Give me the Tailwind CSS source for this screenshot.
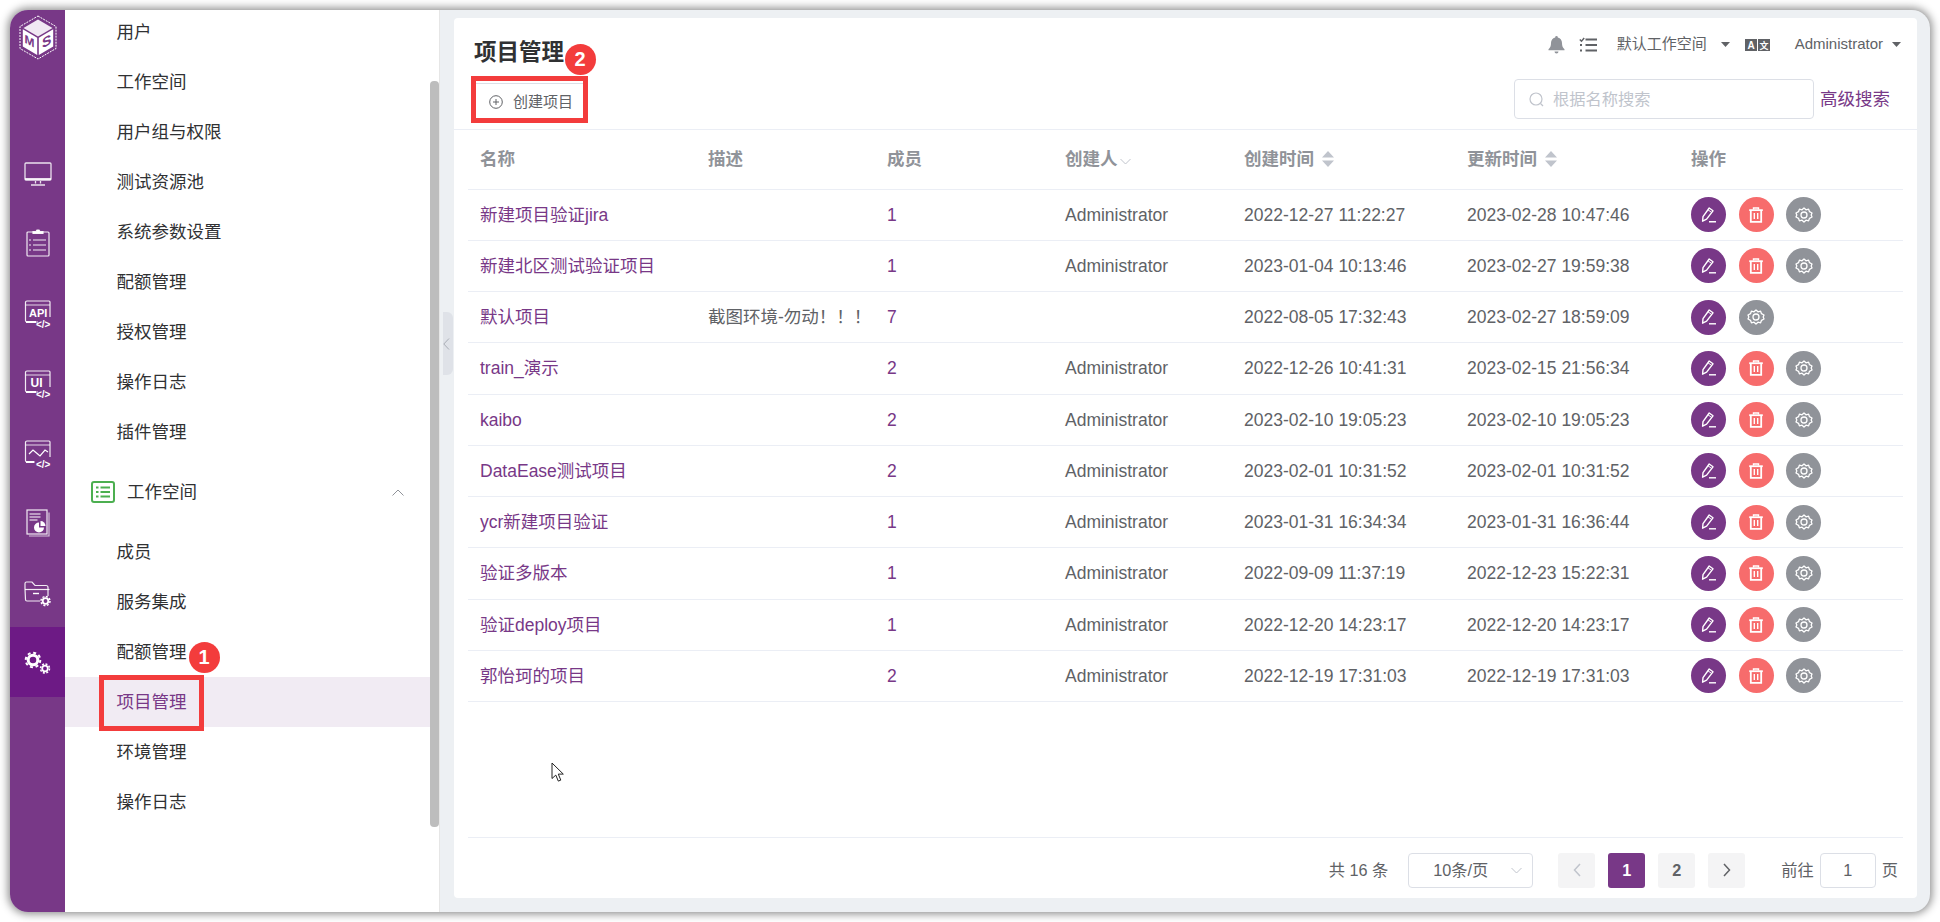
<!DOCTYPE html>
<html lang="zh-CN">
<head>
<meta charset="utf-8">
<title>项目管理</title>
<script src="https://cdn.jsdelivr.net/npm/@tailwindcss/browser@4"></script>
</head>
<body class="m-0 bg-white [font-family:'Liberation_Sans','Noto_Sans_CJK_SC',sans-serif]">
<svg width="0" height="0" class="absolute">
  <defs>
    <symbol id="edit" viewBox="0 0 20 20">
      <path d="M3.600 16.200l.4-4.600L10.200 3l3.800 2.800-6.400 8.400z" fill="none" stroke="#fff" stroke-width="1.400" stroke-linejoin="round"/>
      <path d="M9 4.800l3.800 2.800" stroke="#fff" stroke-width="1"/>
      <path d="M10 16.800h7" stroke="#fff" stroke-width="1.400"/>
    </symbol>
    <symbol id="trash" viewBox="0 0 20 20">
      <path d="M3.200 5.200h13.600" stroke="#fff" stroke-width="1.800"/>
      <path d="M7.500 4.500V3h5v1.500" fill="none" stroke="#fff" stroke-width="1.400"/>
      <path d="M4.800 5.600v11.200h10.400V5.600" fill="none" stroke="#fff" stroke-width="1.800"/>
      <path d="M8.300 8v6M11.700 8v6" stroke="#fff" stroke-width="1.400"/>
    </symbol>
    <symbol id="gear" viewBox="0 0 20 20">
      <path d="M10 3l2 1.800 2.600-.6.9 2.500 2.500 1.300-.8 2 .8 2-2.500 1.300-.9 2.500-2.600-.6L10 17l-2-1.800-2.600.6-.9-2.500L2 12l.8-2-.8-2 2.500-1.300.9-2.500 2.600.6z" fill="none" stroke="#fff" stroke-width="1.300" stroke-linejoin="round"/>
      <circle cx="10" cy="10" r="3" fill="none" stroke="#fff" stroke-width="1.300"/>
    </symbol>
    <symbol id="sort" viewBox="0 0 14 18">
      <path d="M7 1l6 6.500H1zM7 17l-6-6.500h12z" fill="#c0c4cc"/>
    </symbol>
  </defs>
</svg>

<div class="w-[1940px] h-[922px] p-[10px] overflow-hidden">
  <div class="relative flex h-[902px] rounded-[18px] overflow-hidden bg-[#edf0f3] shadow-[0_0_9px_2px_rgba(0,0,0,0.45)]">

    <!-- icon rail -->
    <nav class="w-[55px] shrink-0 flex flex-col bg-[#783887]">
      <div class="h-[127px] flex justify-center pt-[5px]">
        <svg width="38" height="45" viewBox="0 0 38 45">
          <path d="M19 1L37 11.500V33.500L19 44 1 33.500V11.500z" fill="none" stroke="#fff" stroke-width="1" stroke-dasharray="2 1"/>
          <path d="M19 4.500L33.500 13 19 21.500 4.500 13z" fill="#f1e9f3"/>
          <path d="M3.800 14.300L18.200 22.700V40L3.800 31.600z" fill="#fff"/>
          <path d="M34.200 14.300L19.800 22.700V40L34.200 31.600z" fill="#fff"/>
          <text x="0" y="0" transform="translate(5.500 27.500) skewY(28)" font-size="12" font-weight="700" fill="#783887" font-family="Liberation Sans">M</text>
          <text x="0" y="0" transform="translate(23 33.500) skewY(-28)" font-size="14" font-weight="700" fill="#783887" font-family="Liberation Sans">S</text>
        </svg>
      </div>
      <div class="h-[70px] pt-[3px] flex items-center justify-center">
        <svg width="28" height="24" viewBox="0 0 28 24" fill="none" stroke="#fff" stroke-opacity=".85"><rect x="1" y="1" width="26" height="17" rx="1" stroke-width="1.300"/><path d="M1 17h26" stroke-width="2"/><path d="M11.500 19v2.500M16.500 19v2.500" stroke-width="1.300"/><path d="M7 23h14" stroke-width="1.300"/></svg>
      </div>
      <div class="h-[70px] pt-[2px] flex items-center justify-center">
        <svg width="24" height="28" viewBox="0 0 24 28" fill="none" stroke="#fff" stroke-opacity=".9" stroke-width="1.200"><path d="M7 3H2a1 1 0 0 0-1 1v22a1 1 0 0 0 1 1h20a1 1 0 0 0 1-1V4a1 1 0 0 0-1-1h-5"/><path d="M7 4.500V2.500h3l1-1.500h2l1 1.500h3v2z" fill="#fff"/><path d="M3 11h2M7 11h13M3 16h2M7 16h13M3 21h2M7 21h13"/></svg>
      </div>
      <div class="h-[70px] pt-[3px] flex items-center justify-center">
        <svg width="28" height="28" viewBox="0 0 28 28" fill="none"><path d="M14 22H3a1.500 1.500 0 0 1-1.500-1.500V2.500A1.500 1.500 0 0 1 3 1h22a1 1 0 0 1 1 1v15" stroke="#fff" stroke-opacity=".9" stroke-width="1.200"/><path d="M1.500 5h24.500" stroke="#fff" stroke-opacity=".8"/><path d="M2 22h10" stroke="#fff" stroke-width="2"/><text x="5" y="17" font-size="11" font-weight="700" fill="#fff" font-family="Liberation Sans">API</text><text x="12" y="27.500" font-size="10" font-weight="700" fill="#fff" font-family="Liberation Sans">&lt;/&gt;</text></svg>
      </div>
      <div class="h-[70px] pt-[3px] flex items-center justify-center">
        <svg width="28" height="28" viewBox="0 0 28 28" fill="none"><path d="M14 22H3a1.500 1.500 0 0 1-1.500-1.500V2.500A1.500 1.500 0 0 1 3 1h22a1 1 0 0 1 1 1v15" stroke="#fff" stroke-opacity=".9" stroke-width="1.200"/><path d="M1.500 5h24.500" stroke="#fff" stroke-opacity=".8"/><path d="M2 22h10" stroke="#fff" stroke-width="2"/><text x="6.500" y="17" font-size="12" font-weight="700" fill="#fff" font-family="Liberation Sans">UI</text><text x="12" y="27.500" font-size="10" font-weight="700" fill="#fff" font-family="Liberation Sans">&lt;/&gt;</text></svg>
      </div>
      <div class="h-[70px] pt-[3px] flex items-center justify-center">
        <svg width="28" height="28" viewBox="0 0 28 28" fill="none"><path d="M11 22H3a1.500 1.500 0 0 1-1.500-1.500V2.500A1.500 1.500 0 0 1 3 1h22a1 1 0 0 1 1 1v15" stroke="#fff" stroke-opacity=".9" stroke-width="1.200"/><path d="M1.500 5h24.500" stroke="#fff" stroke-opacity=".8"/><path d="M2 22h8" stroke="#fff" stroke-width="2"/><path d="M5 14l4-4 3.500 3 3.500 3 5-6 3 2" stroke="#fff" stroke-width="1.200"/><text x="12" y="27.500" font-size="10" font-weight="700" fill="#fff" font-family="Liberation Sans">&lt;/&gt;</text></svg>
      </div>
      <div class="h-[70px] pt-[2px] flex items-center justify-center">
        <svg width="24" height="28" viewBox="0 0 24 28" fill="none"><rect x="1" y="1" width="20" height="24" stroke="#fff" stroke-opacity=".9" stroke-width="1.200"/><path d="M23 3.500V27H3" stroke="#fff" stroke-opacity=".7" stroke-width="1.200"/><path d="M3.500 5h11M3.500 8h11M3.500 11h8" stroke="#fff" stroke-width="1.100"/><path d="M13 13.500a5 5 0 1 0 5 5h-5z" fill="#fff"/><path d="M14.500 12a5 5 0 0 1 5 5h-5z" fill="#fff"/></svg>
      </div>
      <div class="h-[70px] pt-[3px] flex items-center justify-center">
        <svg width="27" height="26" viewBox="0 0 27 26" fill="none"><path d="M16 20H3a1.500 1.500 0 0 1-1.500-1.500L1 8" stroke="#fff" stroke-opacity=".9" stroke-width="1.200"/><path d="M1 8V2.500A1.500 1.500 0 0 1 2.500 1H8l3 3.500h11a2 2 0 0 1 2 2V15" stroke="#fff" stroke-opacity=".9" stroke-width="1.200"/><path d="M1 8.500h24.500" stroke="#fff" stroke-opacity=".9" stroke-width="1.200"/><path d="M9 12.500h6" stroke="#fff" stroke-width="1.400"/><circle cx="21.500" cy="20" r="2.800" stroke="#fff" stroke-width="1.800"/><circle cx="21.500" cy="20" r="4.500" stroke="#fff" stroke-width="1.500" stroke-dasharray="2 1.500"/></svg>
      </div>
      <div class="h-[70px] pt-[1px] flex items-center justify-center bg-[#6d1a85]">
        <svg width="27" height="24" viewBox="0 0 27 24" fill="none"><circle cx="9" cy="9" r="4.800" stroke="#fff" stroke-width="3"/><circle cx="9" cy="9" r="7.300" stroke="#fff" stroke-width="2" stroke-dasharray="3 2.730"/><circle cx="21" cy="17.500" r="2.800" stroke="#fff" stroke-width="1.800"/><circle cx="21" cy="17.500" r="4.500" stroke="#fff" stroke-width="1.500" stroke-dasharray="2 1.530"/></svg>
      </div>
    </nav>

    <!-- menu -->
    <aside class="relative w-[375px] shrink-0 bg-white border-r border-[#e6e6e6] overflow-hidden text-[17.5px] text-[#303133]">
      <ul class="-mt-[3px]">
        <li class="h-[50px] pl-[51.500px] flex items-center">用户</li>
        <li class="h-[50px] pl-[51.500px] flex items-center">工作空间</li>
        <li class="h-[50px] pl-[51.500px] flex items-center">用户组与权限</li>
        <li class="h-[50px] pl-[51.500px] flex items-center">测试资源池</li>
        <li class="h-[50px] pl-[51.500px] flex items-center">系统参数设置</li>
        <li class="h-[50px] pl-[51.500px] flex items-center">配额管理</li>
        <li class="h-[50px] pl-[51.500px] flex items-center">授权管理</li>
        <li class="h-[50px] pl-[51.500px] flex items-center">操作日志</li>
        <li class="h-[50px] pl-[51.500px] flex items-center">插件管理</li>
      </ul>
      <div class="h-[70px] pl-[26px] pr-[35px] flex items-center">
        <svg width="24" height="22" viewBox="0 0 24 22" fill="none" class="mr-[12px]"><rect x="1" y="1" width="22" height="20" rx="2" stroke="#4caf50" stroke-width="2"/><path d="M5 6.500h2.500M9.500 6.500H19M5 11h2.500M9.500 11H19M5 15.500h2.500M9.500 15.500H19" stroke="#4caf50" stroke-width="2.200"/></svg>
        <span class="flex-1 pt-[1px]">工作空间</span>
        <svg width="12" height="7" viewBox="0 0 12 7" fill="none"><path d="M.5 6.500L6 1l5.500 5.500" stroke="#909399"/></svg>
      </div>
      <ul class="w-[365px]">
        <li class="h-[50px] pl-[51.500px] flex items-center">成员</li>
        <li class="h-[50px] pl-[51.500px] flex items-center">服务集成</li>
        <li class="h-[50px] pl-[51.500px] flex items-center">配额管理</li>
        <li class="h-[50px] pl-[51.500px] flex items-center bg-[#f1ebf3] text-[#783887]">项目管理</li>
        <li class="h-[50px] pl-[51.500px] flex items-center">环境管理</li>
        <li class="h-[50px] pl-[51.500px] flex items-center">操作日志</li>
      </ul>
      <div class="absolute left-[365px] top-[71px] w-[9px] h-[746px] rounded-[4px] bg-[#bdbdbd]"></div>
    </aside>

    <!-- collapse tab -->
    <div class="absolute left-[433px] top-[302px] w-[10px] h-[63px] rounded-r-[6px] bg-[#dfe2e8] flex items-center">
      <svg width="7" height="12" viewBox="0 0 7 12" fill="none"><path d="M6 .5L.8 6 6 11.500" stroke="#a9adb5"/></svg>
    </div>

    <!-- main -->
    <main class="flex-1 min-w-0 pt-[8px] pb-[14px] pl-[14px] pr-[13px]">
      <section class="h-[880px] flex flex-col bg-white rounded-[4px]">
        <header class="h-[112px] shrink-0 flex justify-between border-b border-[#ebeef5] pl-[20px] pr-[16px]">
          <div>
            <h1 class="mt-[20px] h-[30px] leading-[30px] text-[22.5px] font-bold text-[#303133]">项目管理</h1>
            <button class="mt-[15px] w-[111px] h-[37px] border border-[#dcdfe6] flex items-center pl-[14px] pt-[1px] text-[15px] text-[#606266]">
              <svg width="14" height="14" viewBox="0 0 14 14" fill="none" class="mr-[10px]"><circle cx="7" cy="7" r="6.300" stroke="#606266"/><path d="M4 7h6M7 4v6" stroke="#606266"/></svg>
              创建项目
            </button>
          </div>
          <div class="flex flex-col items-end">
            <div class="mt-[14px] h-[25px] flex items-center text-[15px] text-[#606266]">
              <svg width="17" height="18" viewBox="0 0 17 18" class="mr-[14px]"><path d="M8.500 0a1.300 1.300 0 0 1 1.300 1.400c2.800.6 4.200 2.900 4.200 5.600 0 3 .8 4.700 2.500 6.200v1H.5v-1C2.200 11.700 3 10 3 7c0-2.700 1.400-5 4.200-5.600A1.300 1.300 0 0 1 8.500 0zM6.500 15.500h4a2 2 0 0 1-4 0z" fill="#909399"/></svg>
              <svg width="18" height="16" viewBox="0 0 18 16" fill="none" class="mr-[20px]"><path d="M.8 2.500l1.700 1.700L5.200 1" stroke="#606266" stroke-width="1.500"/><path d="M6.500 2.500H18M6.500 8H18M6.500 13.500H18" stroke="#606266" stroke-width="2"/><path d="M1 8h2.500M1 13.500h2.500" stroke="#606266" stroke-width="2.200" stroke-dasharray="2 1"/></svg>
              <span>默认工作空间</span>
              <svg width="9" height="5" viewBox="0 0 9 5" class="ml-[14px]"><path d="M0 0h9L4.500 5z" fill="#606266"/></svg>
              <svg width="25" height="12" viewBox="0 0 25 12" class="ml-[15px]"><rect width="12" height="12" fill="#606266"/><rect x="13" width="12" height="12" fill="#606266"/><text x="2.500" y="10" font-size="10" font-weight="700" fill="#fff" font-family="Liberation Sans">A</text><text x="14.500" y="10" font-size="9" font-weight="700" fill="#fff" font-family="Noto Sans CJK SC">文</text></svg>
              <span class="ml-[25px]">Administrator</span>
              <svg width="9" height="5" viewBox="0 0 9 5" class="ml-[9px]"><path d="M0 0h9L4.500 5z" fill="#606266"/></svg>
            </div>
            <div class="mt-[22px] flex items-center mr-[11px]">
              <div class="w-[300px] h-[40px] rounded-[4px] border border-[#dcdfe6] flex items-center pl-[14px] text-[16.250px] text-[#c0c4cc]">
                <svg width="15" height="15" viewBox="0 0 15 15" fill="none" class="mr-[9px]"><circle cx="7" cy="7" r="6" stroke="#c0c4cc" stroke-width="1.200"/><path d="M11.500 11.500l2.500 2.500" stroke="#c0c4cc" stroke-width="1.200"/></svg>
                根据名称搜索
              </div>
              <a class="ml-[6px] text-[17.5px] text-[#783887]">高级搜索</a>
            </div>
          </div>
        </header>

        <div class="flex-1 px-[14px] text-[17.5px] text-[#606266]">
          <div class="h-[59.500px] grid grid-cols-[228px_179px_178px_179px_223px_224px_1fr] items-center border-b border-[#ebeef5] font-bold text-[#909399]">
            <div class="pl-[12px]">名称</div><div class="pl-[12px]">描述</div><div class="pl-[12px]">成员</div>
            <div class="pl-[12px] flex items-center">创建人<svg width="11" height="7" viewBox="0 0 11 7" fill="none" class="ml-[2px] mt-[4px]"><path d="M.5 1l5 5 5-5" stroke="#c0c4cc"/></svg></div>
            <div class="pl-[12px] flex items-center">创建时间<svg width="14" height="18" class="ml-[7px]"><use href="#sort"/></svg></div>
            <div class="pl-[12px] flex items-center">更新时间<svg width="14" height="18" class="ml-[7px]"><use href="#sort"/></svg></div>
            <div class="pl-[12px]">操作</div>
          </div>

          <div class="h-[51.250px] grid grid-cols-[228px_179px_178px_179px_223px_224px_1fr] items-center border-b border-[#ebeef5]">
            <div class="pl-[12px] text-[#783887]">新建项目验证jira</div><div class="pl-[12px]"></div><div class="pl-[12px] text-[#783887]">1</div><div class="pl-[12px]">Administrator</div><div class="pl-[12px]">2022-12-27 11:22:27</div><div class="pl-[12px]">2023-02-28 10:47:46</div>
            <div class="pl-[12px] flex gap-[12.500px]">
              <span class="w-[35px] h-[35px] rounded-full bg-[#783887] flex items-center justify-center"><svg width="20" height="20"><use href="#edit"/></svg></span>
              <span class="w-[35px] h-[35px] rounded-full bg-[#f76c6c] flex items-center justify-center"><svg width="20" height="20"><use href="#trash"/></svg></span>
              <span class="w-[35px] h-[35px] rounded-full bg-[#909399] flex items-center justify-center"><svg width="20" height="20"><use href="#gear"/></svg></span>
            </div>
          </div>
          <div class="h-[51.250px] grid grid-cols-[228px_179px_178px_179px_223px_224px_1fr] items-center border-b border-[#ebeef5]">
            <div class="pl-[12px] text-[#783887]">新建北区测试验证项目</div><div class="pl-[12px]"></div><div class="pl-[12px] text-[#783887]">1</div><div class="pl-[12px]">Administrator</div><div class="pl-[12px]">2023-01-04 10:13:46</div><div class="pl-[12px]">2023-02-27 19:59:38</div>
            <div class="pl-[12px] flex gap-[12.500px]">
              <span class="w-[35px] h-[35px] rounded-full bg-[#783887] flex items-center justify-center"><svg width="20" height="20"><use href="#edit"/></svg></span>
              <span class="w-[35px] h-[35px] rounded-full bg-[#f76c6c] flex items-center justify-center"><svg width="20" height="20"><use href="#trash"/></svg></span>
              <span class="w-[35px] h-[35px] rounded-full bg-[#909399] flex items-center justify-center"><svg width="20" height="20"><use href="#gear"/></svg></span>
            </div>
          </div>
          <div class="h-[51.250px] grid grid-cols-[228px_179px_178px_179px_223px_224px_1fr] items-center border-b border-[#ebeef5]">
            <div class="pl-[12px] text-[#783887]">默认项目</div><div class="pl-[12px]">截图环境-勿动！！！</div><div class="pl-[12px] text-[#783887]">7</div><div class="pl-[12px]"></div><div class="pl-[12px]">2022-08-05 17:32:43</div><div class="pl-[12px]">2023-02-27 18:59:09</div>
            <div class="pl-[12px] flex gap-[12.500px]">
              <span class="w-[35px] h-[35px] rounded-full bg-[#783887] flex items-center justify-center"><svg width="20" height="20"><use href="#edit"/></svg></span>
              <span class="w-[35px] h-[35px] rounded-full bg-[#909399] flex items-center justify-center"><svg width="20" height="20"><use href="#gear"/></svg></span>
            </div>
          </div>
          <div class="h-[51.250px] grid grid-cols-[228px_179px_178px_179px_223px_224px_1fr] items-center border-b border-[#ebeef5]">
            <div class="pl-[12px] text-[#783887]">train_演示</div><div class="pl-[12px]"></div><div class="pl-[12px] text-[#783887]">2</div><div class="pl-[12px]">Administrator</div><div class="pl-[12px]">2022-12-26 10:41:31</div><div class="pl-[12px]">2023-02-15 21:56:34</div>
            <div class="pl-[12px] flex gap-[12.500px]">
              <span class="w-[35px] h-[35px] rounded-full bg-[#783887] flex items-center justify-center"><svg width="20" height="20"><use href="#edit"/></svg></span>
              <span class="w-[35px] h-[35px] rounded-full bg-[#f76c6c] flex items-center justify-center"><svg width="20" height="20"><use href="#trash"/></svg></span>
              <span class="w-[35px] h-[35px] rounded-full bg-[#909399] flex items-center justify-center"><svg width="20" height="20"><use href="#gear"/></svg></span>
            </div>
          </div>
          <div class="h-[51.250px] grid grid-cols-[228px_179px_178px_179px_223px_224px_1fr] items-center border-b border-[#ebeef5]">
            <div class="pl-[12px] text-[#783887]">kaibo</div><div class="pl-[12px]"></div><div class="pl-[12px] text-[#783887]">2</div><div class="pl-[12px]">Administrator</div><div class="pl-[12px]">2023-02-10 19:05:23</div><div class="pl-[12px]">2023-02-10 19:05:23</div>
            <div class="pl-[12px] flex gap-[12.500px]">
              <span class="w-[35px] h-[35px] rounded-full bg-[#783887] flex items-center justify-center"><svg width="20" height="20"><use href="#edit"/></svg></span>
              <span class="w-[35px] h-[35px] rounded-full bg-[#f76c6c] flex items-center justify-center"><svg width="20" height="20"><use href="#trash"/></svg></span>
              <span class="w-[35px] h-[35px] rounded-full bg-[#909399] flex items-center justify-center"><svg width="20" height="20"><use href="#gear"/></svg></span>
            </div>
          </div>
          <div class="h-[51.250px] grid grid-cols-[228px_179px_178px_179px_223px_224px_1fr] items-center border-b border-[#ebeef5]">
            <div class="pl-[12px] text-[#783887]">DataEase测试项目</div><div class="pl-[12px]"></div><div class="pl-[12px] text-[#783887]">2</div><div class="pl-[12px]">Administrator</div><div class="pl-[12px]">2023-02-01 10:31:52</div><div class="pl-[12px]">2023-02-01 10:31:52</div>
            <div class="pl-[12px] flex gap-[12.500px]">
              <span class="w-[35px] h-[35px] rounded-full bg-[#783887] flex items-center justify-center"><svg width="20" height="20"><use href="#edit"/></svg></span>
              <span class="w-[35px] h-[35px] rounded-full bg-[#f76c6c] flex items-center justify-center"><svg width="20" height="20"><use href="#trash"/></svg></span>
              <span class="w-[35px] h-[35px] rounded-full bg-[#909399] flex items-center justify-center"><svg width="20" height="20"><use href="#gear"/></svg></span>
            </div>
          </div>
          <div class="h-[51.250px] grid grid-cols-[228px_179px_178px_179px_223px_224px_1fr] items-center border-b border-[#ebeef5]">
            <div class="pl-[12px] text-[#783887]">ycr新建项目验证</div><div class="pl-[12px]"></div><div class="pl-[12px] text-[#783887]">1</div><div class="pl-[12px]">Administrator</div><div class="pl-[12px]">2023-01-31 16:34:34</div><div class="pl-[12px]">2023-01-31 16:36:44</div>
            <div class="pl-[12px] flex gap-[12.500px]">
              <span class="w-[35px] h-[35px] rounded-full bg-[#783887] flex items-center justify-center"><svg width="20" height="20"><use href="#edit"/></svg></span>
              <span class="w-[35px] h-[35px] rounded-full bg-[#f76c6c] flex items-center justify-center"><svg width="20" height="20"><use href="#trash"/></svg></span>
              <span class="w-[35px] h-[35px] rounded-full bg-[#909399] flex items-center justify-center"><svg width="20" height="20"><use href="#gear"/></svg></span>
            </div>
          </div>
          <div class="h-[51.250px] grid grid-cols-[228px_179px_178px_179px_223px_224px_1fr] items-center border-b border-[#ebeef5]">
            <div class="pl-[12px] text-[#783887]">验证多版本</div><div class="pl-[12px]"></div><div class="pl-[12px] text-[#783887]">1</div><div class="pl-[12px]">Administrator</div><div class="pl-[12px]">2022-09-09 11:37:19</div><div class="pl-[12px]">2022-12-23 15:22:31</div>
            <div class="pl-[12px] flex gap-[12.500px]">
              <span class="w-[35px] h-[35px] rounded-full bg-[#783887] flex items-center justify-center"><svg width="20" height="20"><use href="#edit"/></svg></span>
              <span class="w-[35px] h-[35px] rounded-full bg-[#f76c6c] flex items-center justify-center"><svg width="20" height="20"><use href="#trash"/></svg></span>
              <span class="w-[35px] h-[35px] rounded-full bg-[#909399] flex items-center justify-center"><svg width="20" height="20"><use href="#gear"/></svg></span>
            </div>
          </div>
          <div class="h-[51.250px] grid grid-cols-[228px_179px_178px_179px_223px_224px_1fr] items-center border-b border-[#ebeef5]">
            <div class="pl-[12px] text-[#783887]">验证deploy项目</div><div class="pl-[12px]"></div><div class="pl-[12px] text-[#783887]">1</div><div class="pl-[12px]">Administrator</div><div class="pl-[12px]">2022-12-20 14:23:17</div><div class="pl-[12px]">2022-12-20 14:23:17</div>
            <div class="pl-[12px] flex gap-[12.500px]">
              <span class="w-[35px] h-[35px] rounded-full bg-[#783887] flex items-center justify-center"><svg width="20" height="20"><use href="#edit"/></svg></span>
              <span class="w-[35px] h-[35px] rounded-full bg-[#f76c6c] flex items-center justify-center"><svg width="20" height="20"><use href="#trash"/></svg></span>
              <span class="w-[35px] h-[35px] rounded-full bg-[#909399] flex items-center justify-center"><svg width="20" height="20"><use href="#gear"/></svg></span>
            </div>
          </div>
          <div class="h-[51.250px] grid grid-cols-[228px_179px_178px_179px_223px_224px_1fr] items-center border-b border-[#ebeef5]">
            <div class="pl-[12px] text-[#783887]">郭怡珂的项目</div><div class="pl-[12px]"></div><div class="pl-[12px] text-[#783887]">2</div><div class="pl-[12px]">Administrator</div><div class="pl-[12px]">2022-12-19 17:31:03</div><div class="pl-[12px]">2022-12-19 17:31:03</div>
            <div class="pl-[12px] flex gap-[12.500px]">
              <span class="w-[35px] h-[35px] rounded-full bg-[#783887] flex items-center justify-center"><svg width="20" height="20"><use href="#edit"/></svg></span>
              <span class="w-[35px] h-[35px] rounded-full bg-[#f76c6c] flex items-center justify-center"><svg width="20" height="20"><use href="#trash"/></svg></span>
              <span class="w-[35px] h-[35px] rounded-full bg-[#909399] flex items-center justify-center"><svg width="20" height="20"><use href="#gear"/></svg></span>
            </div>
          </div>
        </div>

        <footer class="mx-[14px] h-[61px] shrink-0 border-t border-[#ebeef5] flex items-center justify-end pt-[4px] pr-[5px] text-[16.250px] text-[#606266]">
          <span>共 16 条</span>
          <div class="ml-[20px] w-[125px] h-[35px] rounded-[4px] border border-[#dcdfe6] flex items-center pl-[24px] pr-[10px] justify-between">
            <span>10条/页</span>
            <svg width="11" height="7" viewBox="0 0 11 7" fill="none"><path d="M.5 1l5 5 5-5" stroke="#c0c4cc"/></svg>
          </div>
          <span class="ml-[25px] w-[37px] h-[35px] rounded-[3px] bg-[#f4f4f5] flex items-center justify-center"><svg width="8" height="14" viewBox="0 0 8 14" fill="none"><path d="M7 1L1.500 7 7 13" stroke="#c0c4cc" stroke-width="1.500"/></svg></span>
          <span class="ml-[13px] w-[37px] h-[35px] rounded-[3px] bg-[#783887] text-white font-bold flex items-center justify-center">1</span>
          <span class="ml-[13px] w-[37px] h-[35px] rounded-[3px] bg-[#f4f4f5] text-[#606266] font-bold flex items-center justify-center">2</span>
          <span class="ml-[13px] w-[37px] h-[35px] rounded-[3px] bg-[#f4f4f5] flex items-center justify-center"><svg width="8" height="14" viewBox="0 0 8 14" fill="none"><path d="M1 1l5.500 6L1 13" stroke="#606266" stroke-width="1.500"/></svg></span>
          <span class="ml-[36px]">前往</span>
          <span class="ml-[6px] w-[56px] h-[35px] rounded-[4px] border border-[#dcdfe6] flex items-center justify-center">1</span>
          <span class="ml-[6px]">页</span>
        </footer>
      </section>
    </main>

    <!-- annotations over the page -->
    <div class="absolute left-[89px] top-[665px] w-[105px] h-[56px] border-[5px] border-[#f33c3c]"></div>
    <div class="absolute left-[461px] top-[66px] w-[117px] h-[47px] border-[5px] border-[#f33c3c]"></div>
    <div class="absolute left-[178.500px] top-[631.500px] w-[31px] h-[31px] rounded-full bg-[#f33c3c] text-white text-[20px] font-bold flex items-center justify-center">1</div>
    <div class="absolute left-[554.500px] top-[33.500px] w-[31px] h-[31px] rounded-full bg-[#f33c3c] text-white text-[20px] font-bold flex items-center justify-center">2</div>
    <svg class="absolute left-[541px] top-[752px]" width="15" height="21" viewBox="0 0 15 21"><path d="M1 1v15.500l3.800-3.400 2.500 6 2.500-1-2.500-6h5z" fill="#fff" stroke="#222" stroke-width="1"/></svg>
  </div>
</div>
</body>
</html>
